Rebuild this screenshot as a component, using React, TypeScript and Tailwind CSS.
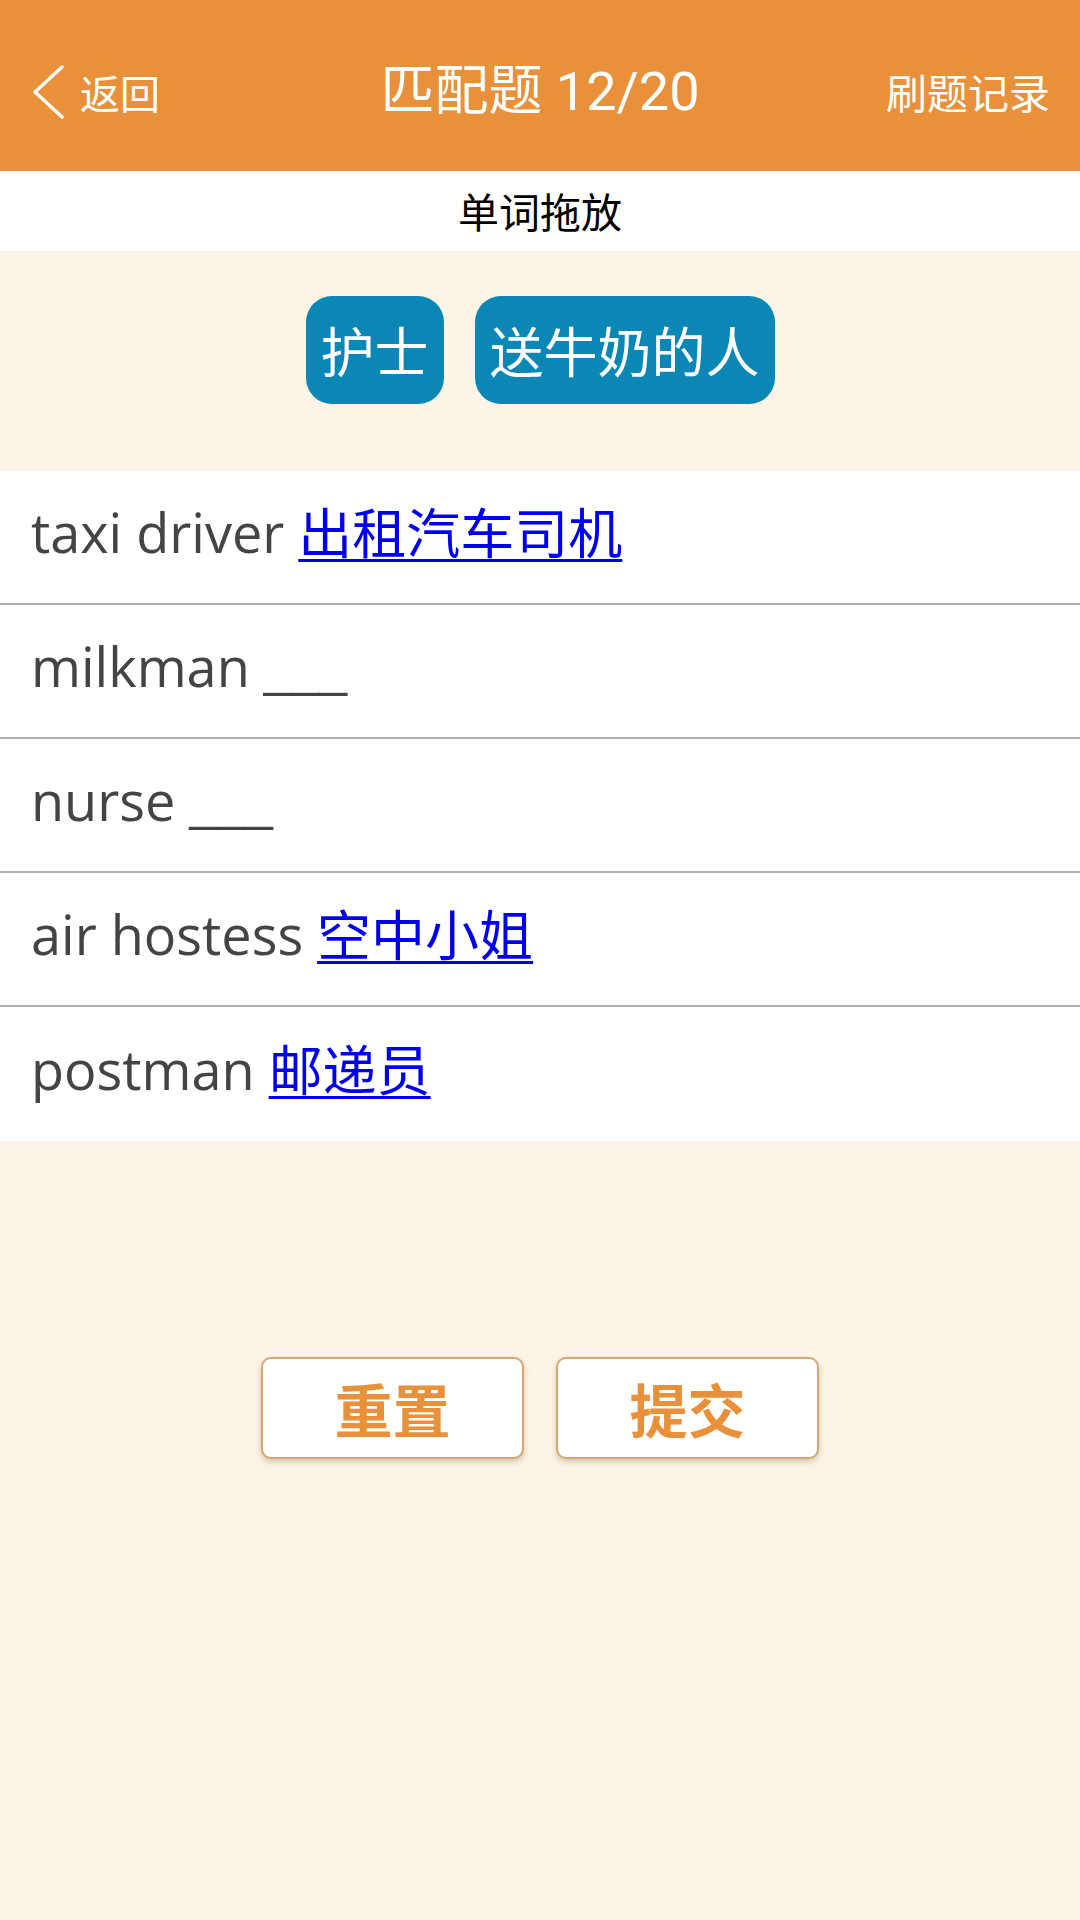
import React from 'react';

const cjk = '"Noto Sans CJK SC", sans-serif';

const chips = ['护士', '送牛奶的人'];

const rows: { en: string; zh?: string }[] = [
  { en: 'taxi driver', zh: '出租汽车司机' },
  { en: 'milkman' },
  { en: 'nurse' },
  { en: 'air hostess', zh: '空中小姐' },
  { en: 'postman', zh: '邮递员' },
];

function BackIcon() {
  return (
    <svg width="36" height="56" viewBox="0 0 36 56" fill="none">
      <path d="M32 3 L5 28 L32 53" stroke="#fff" strokeWidth="3.5" strokeLinecap="round" strokeLinejoin="round" />
    </svg>
  );
}

export default function App() {
  return (
    <div className="min-h-[1920px] w-[1080px] bg-[#fcf5e7] flex flex-col" style={{ fontFamily: cjk }}>
      {/* Top bar */}
      <div className="h-[171px] bg-[#e8913a] flex items-center justify-between px-[30px] pt-[12px] text-white">
        <div className="flex items-center gap-[14px] w-[260px]">
          <BackIcon />
          <span className="text-[40px] leading-none">返回</span>
        </div>
        <div className="text-[54px] leading-none font-['Roboto','Noto_Sans_CJK_SC',sans-serif]">匹配题 12/20</div>
        <div className="w-[260px] text-right text-[41px] leading-none">刷题记录</div>
      </div>

      {/* Section title */}
      <div className="h-[80px] bg-white flex items-center justify-center text-black text-[41px]">单词拖放</div>

      {/* Word bank */}
      <div className="pt-[45px] pb-[67px] flex justify-center gap-[31px]">
        {chips.map((c) => (
          <div key={c} className="h-[108px] px-[15px] rounded-[26px] bg-[#0a87b5] text-white text-[54px] flex items-center leading-none">
            {c}
          </div>
        ))}
      </div>

      {/* Match rows */}
      <div className="bg-white">
        {rows.map((r, i) => (
          <div
            key={r.en}
            className={`h-[134px] flex items-center px-[31px] pb-[10px] text-[54px] text-[#444] ${i < rows.length - 1 ? 'border-b-2 border-[#b0b0b0]' : ''}`}
            style={{ fontFamily: '"Open Sans", "Noto Sans CJK SC", sans-serif' }}
          >
            <span>{r.en}</span>
            <span className="ml-[14px]">
              {r.zh ? (
                <a href="#" className="text-[#0000ee] underline underline-offset-[5px] decoration-[3px]" style={{ fontFamily: cjk }}>
                  {r.zh}
                </a>
              ) : (
                <span className="text-[50px] font-['Liberation_Sans',sans-serif]">___</span>
              )}
            </span>
          </div>
        ))}
      </div>

      {/* Actions */}
      <div className="mt-[216px] flex justify-center gap-[32px]">
        {['重置', '提交'].map((b) => (
          <button
            key={b}
            className="w-[263px] h-[102px] bg-white border-2 border-[#d6a772] rounded-[10px] shadow-[0_3px_6px_rgba(150,110,60,0.35)] text-[#e8913a] text-[58px] font-bold flex items-center justify-center"
          >
            {b}
          </button>
        ))}
      </div>
    </div>
  );
}
